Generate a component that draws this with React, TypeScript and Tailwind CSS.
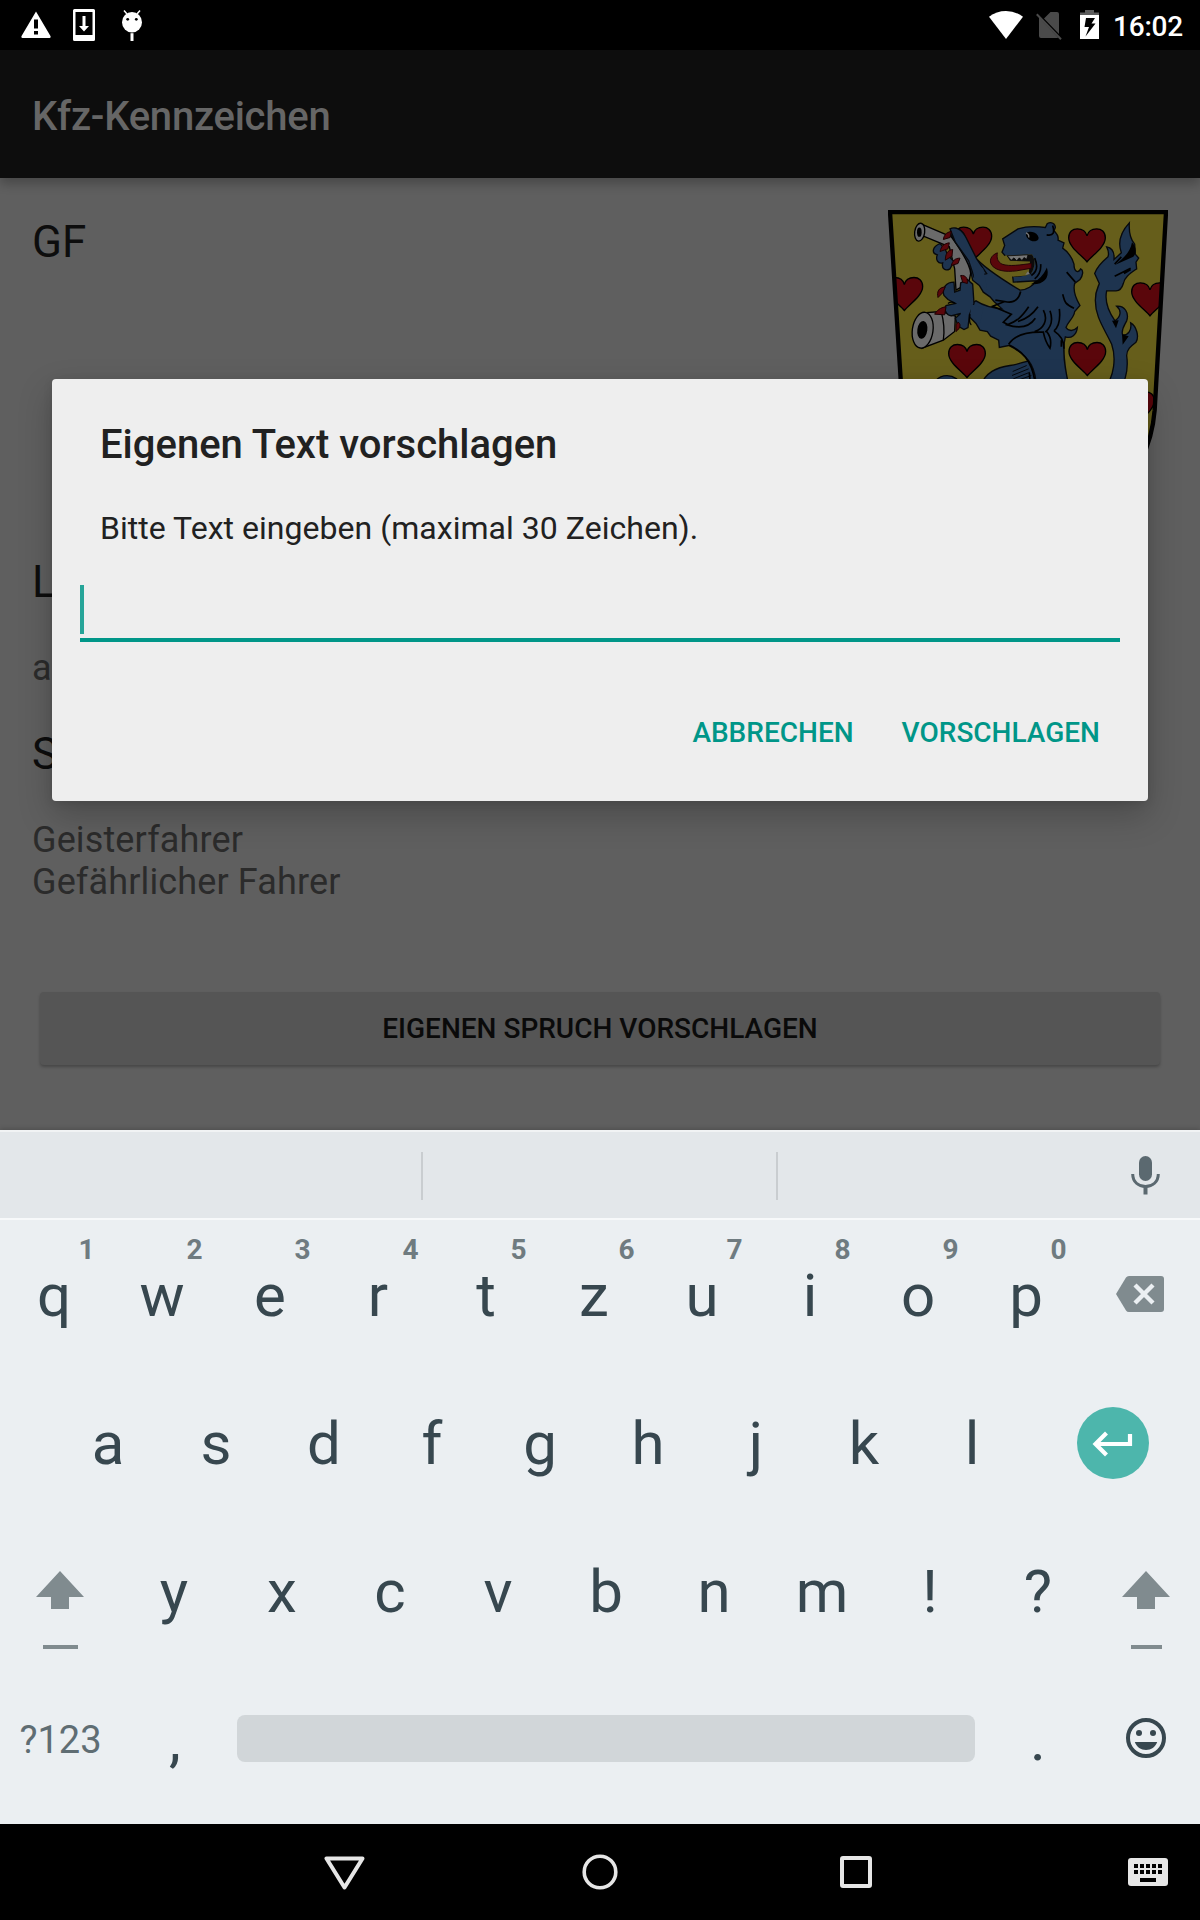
import type { ReactNode } from "react";

function Heart({ x, y }: { x: number; y: number }) {
  return (
    <path
      transform={`translate(${x} ${y})`}
      d="M0 50 C-14 32 -55 6 -55 -22 C-55 -40 -43 -49 -29 -49 C-14 -49 -3 -40 0 -28 C3 -40 14 -49 29 -49 C43 -49 55 -40 55 -22 C55 6 14 32 0 50Z"
      fill="#5a060b"
      stroke="#000"
      strokeWidth="4"
    />
  );
}

function Crest() {
  return (
    <svg width="280" height="327" viewBox="54 60 840 980" className="block">
      <defs>
        <clipPath id="shield">
          <path d="M60 66H888L854 660Q840 830 720 910Q600 985 474 1020Q340 985 230 910Q112 830 98 660Z" />
        </clipPath>
      </defs>
      <path d="M60 66H888L854 660Q840 830 720 910Q600 985 474 1020Q340 985 230 910Q112 830 98 660Z" fill="#665e1b" />
      <g clipPath="url(#shield)">
        <Heart x={310} y={160} />
        <Heart x={651} y={165} />
        <Heart x={103} y={311} />
        <Heart x={840} y={327} />
        <Heart x={291} y={512} />
        <Heart x={652} y={506} />
        <Heart x={798} y={654} />

        {/* tail */}
        <path
          d="M700 600C735 560 738 500 725 462C700 410 676 380 676 330C676 300 685 290 688 280L674 250C680 232 700 212 714 200C718 188 714 178 710 170C722 172 734 182 732 208L754 188C744 160 748 130 778 98C776 130 782 148 794 162L796 192L806 204L798 216L800 236C780 250 762 262 760 280C756 294 748 302 738 302L710 302C704 330 710 356 735 392C752 380 756 362 740 348C764 346 778 368 770 392C762 408 752 420 758 434C774 436 786 420 782 398C800 408 808 440 798 456C782 468 770 478 770 496C776 540 765 575 748 600Z"
          fill="#1e344f"
          stroke="#07090c"
          strokeWidth="4"
        />
        <path d="M786 156C800 170 800 188 790 200L736 224C756 206 780 190 786 156ZM726 392L746 390L738 414ZM756 432L776 438L758 464Z" fill="#000" />
        <path d="M734 222L754 200M734 258L782 234M762 250L782 238" fill="none" stroke="#000" strokeWidth="5" />

        {/* far hip and mane of the body */}
        <path d="M190 580C206 556 234 548 260 566L270 590ZM330 590C346 546 380 532 420 526C450 522 458 516 476 512L520 600Z" fill="#1e344f" stroke="#07090c" strokeWidth="4" />
        <path d="M428 544L470 526M426 556L476 536M430 566L480 546M450 568L484 556" stroke="#000" strokeWidth="2.5" />

        {/* head, mane and torso */}
        <path
          d="M398 146L444 116C470 108 500 108 526 112L532 100C544 94 556 100 556 112L552 122C562 132 566 142 564 150L582 158L578 174C596 186 606 202 612 222C612 240 622 254 632 236C642 240 638 258 630 268L614 280C608 302 616 322 630 346L614 364C612 384 592 396 588 412C596 424 610 424 622 412C620 434 604 446 586 440C578 470 582 530 600 600H500C498 540 486 500 416 466L388 472L386 450L362 438L352 424L330 420L318 400L298 380L304 340L318 332C340 346 372 354 396 356L372 334L360 320L340 306L328 286L308 270L300 232L240 128C248 108 266 112 280 128L310 196C340 232 400 270 450 300C470 300 490 286 498 272L430 276L428 258C450 260 468 252 482 250C486 220 478 204 480 198L410 202L396 186L404 166Z"
          fill="#1e344f"
          stroke="#07090c"
          strokeWidth="4"
        />
        <path d="M406 196L486 193C496 208 496 226 486 246L468 256L428 260L400 234L374 220Z" fill="#665e1b" />
        <path d="M410 196L486 193C496 208 496 226 486 246L476 252L480 214L420 212Z" fill="#0c0c0c" />
        <path d="M412 197L474 194L470 207L462 202L456 211L448 203L440 212L432 203L424 210Z" fill="#777" stroke="#000" strokeWidth="2" />
        <path d="M382 188C362 196 356 212 366 226C380 242 406 246 440 242L484 234L484 220C450 224 420 230 396 222C382 214 380 204 382 188Z" fill="#5a060b" stroke="#250306" strokeWidth="3" />
        <path d="M466 254L474 243L480 252Z" fill="#777" />
        <ellipse cx="487" cy="139" rx="20" ry="13" transform="rotate(25 487 139)" fill="#000" />
        <path d="M468 128Q478 132 476 142" stroke="#777" strokeWidth="4" fill="none" />
        <path d="M530 238C536 262 520 280 490 280C508 270 520 260 530 238Z" fill="#000" stroke="#000" strokeWidth="4" />
        <path
          d="M494 204C504 226 502 244 484 256M512 222C514 246 504 258 494 266M548 106C554 126 552 138 530 134M590 246L616 276M578 312C584 330 580 340 612 354M452 304C446 330 430 340 404 334L376 330M404 334L368 348L424 372L400 396L412 402M476 350C456 380 440 394 412 404C450 416 480 408 496 384M504 350C490 370 466 388 444 394M520 360C536 390 520 416 494 424M540 362C550 390 544 410 526 426M568 356C572 390 566 410 552 422M416 462C430 440 462 424 520 426C526 456 534 466 540 474C546 450 538 434 530 424M552 422C572 436 582 450 582 476M416 464C456 482 484 510 494 570M478 548L480 570M574 450V470"
          fill="none"
          stroke="#000"
          strokeWidth="5"
        />

        {/* upper and lower horn */}
        <path d="M160 104L244 140C270 176 300 220 302 250L296 278L258 300L254 236L238 170L160 138Z" fill="#6a6a6a" stroke="#000" strokeWidth="4" />
        <ellipse cx="149" cy="126" rx="15" ry="27" transform="rotate(8 149 126)" fill="#6a6a6a" stroke="#000" strokeWidth="4" />
        <ellipse cx="148" cy="126" rx="7" ry="14" fill="#000" />
        <path d="M160 368L214 364L256 378L254 424L220 450L156 474Z" fill="#6a6a6a" stroke="#000" strokeWidth="4" />
        <path d="M214 366Q226 410 220 450" stroke="#000" strokeWidth="4" fill="none" />
        <ellipse cx="158" cy="420" rx="31" ry="54" transform="rotate(8 158 420)" fill="#6a6a6a" stroke="#000" strokeWidth="4" />
        <ellipse cx="157" cy="419" rx="15" ry="27" transform="rotate(8 157 419)" fill="#000" />

        {/* paws */}
        <path
          d="M210 160C186 170 184 190 202 194C196 208 204 222 218 218C214 236 226 244 240 236L252 214L234 196L226 178ZM240 116C256 108 276 118 288 142L320 206L350 250L312 260L296 212L256 156Z"
          fill="#1e344f"
          stroke="#07090c"
          strokeWidth="4"
        />
        <path d="M312 340L308 282L292 268L272 278L270 300L254 306L252 276C230 276 214 292 222 316L234 328L256 340L228 346C220 360 232 380 248 376L272 370L256 384L264 408L282 418L294 412L298 374Z" fill="#1e344f" stroke="#07090c" strokeWidth="4" />
        <path d="M304 342L340 354L330 400L300 376ZM308 210L340 236L352 300L312 262Z" fill="#1e344f" />
        <path d="M300 372Q296 400 304 404M234 340Q244 332 256 340" fill="none" stroke="#000" strokeWidth="4" />
        <path
          d="M244 124C228 126 222 136 220 148L240 142ZM238 158C222 160 214 168 210 184L234 176ZM248 178C232 180 226 192 226 210L246 198ZM270 204C254 204 248 212 244 226L264 220ZM272 256C288 254 294 266 292 280L278 276ZM226 290C206 292 200 304 204 322L218 308ZM228 350C210 352 200 362 194 372L224 374ZM264 396C272 400 274 412 258 424L258 404Z"
          fill="#5a060b"
          stroke="#1d0204"
          strokeWidth="3"
        />
      </g>
      <path d="M60 66H888L854 660Q840 830 720 910Q600 985 474 1020Q340 985 230 910Q112 830 98 660Z" fill="none" stroke="#000" strokeWidth="13" />
    </svg>
  );
}

function StatusBar() {
  return (
    <header className="flex h-[50px] items-start bg-black pl-[21px] pr-[16px] text-white">
      <svg width="30" height="50" viewBox="0 0 30 50">
        <path fill="#fff" fillRule="evenodd" d="M15 11.5 29.6 36.2Q30 38 28.6 38H1.4Q0 38 .4 36.2ZM13 19.5V28.5H17V19.5ZM13 31V34.5H17V31Z" />
      </svg>
      <svg className="ml-[22px]" width="22" height="50" viewBox="0 0 22 50">
        <path fill="#fff" fillRule="evenodd" d="M1.500 9H20.500Q22 9 22 10.500V39.500Q22 41 20.500 41H1.500Q0 41 0 39.500V10.500Q0 9 1.500 9ZM2.500 12V35H19.500V12Z" />
        <path fill="#fff" d="M9.500 16H12.500V26H16L11 31.500 6 26H9.500Z" />
      </svg>
      <svg className="ml-[27px]" width="20" height="50" viewBox="0 0 20 50">
        <path stroke="#fff" strokeWidth="1.500" d="M2 10.500 5 14M18 10.500 15 14" />
        <ellipse cx="10" cy="22.200" rx="10" ry="10.200" fill="#fff" />
        <circle cx="5.700" cy="19.300" r="1.400" fill="#000" />
        <circle cx="14.300" cy="19.300" r="1.400" fill="#000" />
        <path fill="#fff" d="M8.500 33.200H11.500V41H8.500Z" />
      </svg>
      <svg className="ml-auto" width="34" height="50" viewBox="0 0 34 50">
        <path fill="#fff" d="M17 39 0 16.800Q7.500 11 17 11T34 16.800Z" />
      </svg>
      <svg className="ml-[13px]" width="26" height="50" viewBox="0 0 26 50">
        <path fill="#4a4a4a" d="M8 18.500 14.500 12H21Q23 12 23 14V34ZM3 17 22 37.500Q21.500 38 21 38H5Q3 38 3 36Z" />
        <path d="M.8 14.300 25 39.300" stroke="#4a4a4a" strokeWidth="2" />
      </svg>
      <svg className="ml-[18px]" width="19" height="50" viewBox="0 0 19 50">
        <path fill="#5c5c5c" d="M5 10H14V12.500H19V15H0V12.500H5Z" />
        <path fill="#fff" fillRule="evenodd" d="M0 15H19V39H0ZM6 18 4.500 27H9L5.500 36.500 15.500 23.500H11.500L15 18Z" />
      </svg>
      <span className="ml-[14px] w-[71px] whitespace-nowrap text-[28px] font-medium leading-[53px] tracking-[-0.2px]">16:02</span>
    </header>
  );
}

function Key({ label, hint }: { label: string; hint?: string }) {
  return (
    <button className="relative h-[148px] w-[108px] text-center text-[60px] leading-[148px] text-[#37474f]">
      {label}
      {hint && <span className="absolute right-[13.5px] top-[11px] text-[28px] font-bold leading-[33px] text-[#6f7b80]">{hint}</span>}
    </button>
  );
}

function KeyRow({ className, children }: { className: string; children: ReactNode }) {
  return <div className={"flex h-[148px] " + className}>{children}</div>;
}

function Shift({ narrow }: { narrow?: boolean }) {
  return (
    <svg width={narrow ? 108 : 120} height="148" viewBox={narrow ? "6 0 108 148" : "0 0 120 148"}>
      <path fill="#808b8f" d="M60 49 84 75H69V87H51V75H36Z" />
      <path fill="#808b8f" d={narrow ? "M45 123H76V127H45Z" : "M43 123H78V127H43Z"} />
    </svg>
  );
}

const topRow = ["q", "w", "e", "r", "t", "z", "u", "i", "o", "p"];

function Keyboard() {
  return (
    <section className="relative h-[694px] bg-[#ebeff2] shadow-[0_-1px_5px_rgba(0,0,0,0.2)]">
      <div className="flex h-[90px] items-center border-b-2 border-t-2 border-b-[#f7f9fa] border-t-[#f1f3f4] bg-[#e3e7ea]">
        <div className="ml-[421px] mt-[2px] h-[48px] w-[2px] bg-[#c9cdd0]" />
        <div className="ml-[353px] mt-[2px] h-[48px] w-[2px] bg-[#c9cdd0]" />
        <svg className="ml-auto mr-[40px]" width="29" height="40" viewBox="0 0 29 40">
          <rect x="8" y="1" width="13" height="25" rx="6.500" fill="#5b6970" />
          <path d="M1.700 19C1.700 27 7.500 31.500 14.500 31.500S27.300 27 27.300 19" fill="none" stroke="#5b6970" strokeWidth="3" />
          <path d="M12.500 31.500H16.500V39.500H12.500Z" fill="#5b6970" />
        </svg>
      </div>
      <div className="pt-[2px]">
        <KeyRow className="">
          {topRow.map((k, i) => (
            <Key key={k} label={k} hint={String((i + 1) % 10)} />
          ))}
          <svg width="120" height="148" viewBox="0 0 120 148">
            <path fill="#808b8f" d="M49 54H81Q84 54 84 57V87Q84 90 81 90H49Q47 90 46 88.500L36 72 46 55.500Q47 54 49 54Z" />
            <path stroke="#ebeff2" strokeWidth="4.400" d="M55 63 73 81M73 63 55 81" />
          </svg>
        </KeyRow>
        <KeyRow className="pl-[54px]">
          {[..."asdfghjkl"].map((k) => (
            <Key key={k} label={k} />
          ))}
          <div className="ml-[51px] mt-[37px] h-[72px] w-[72px] rounded-full bg-[#4db6ac]">
            <svg width="72" height="72" viewBox="0 0 72 72">
              <path d="M53 27V37H19M29.500 26 18.500 37 29.500 48" fill="none" stroke="#fff" strokeWidth="4.200" />
            </svg>
          </div>
        </KeyRow>
        <KeyRow className="">
          <div className="pt-[4px]">
            <Shift />
          </div>
          {[..."yxcvbnm!?"].map((k) => (
            <Key key={k} label={k} />
          ))}
          <div className="pt-[4px]">
            <Shift narrow />
          </div>
        </KeyRow>
        <KeyRow className="">
          <button className="w-[121px] text-center text-[38px] leading-[149px] text-[#5f6d73]">?123</button>
          <Key label="," />
          <div className="ml-[8px] mr-[9px] mt-[49px] h-[47px] w-[738px] rounded-[8px] bg-[#d1d6d9]" />
          <Key label="." />
          <svg width="108" height="148" viewBox="0 0 108 148">
            <circle cx="54" cy="72" r="18" fill="none" stroke="#37474f" strokeWidth="4" />
            <circle cx="47" cy="67" r="3" fill="#37474f" />
            <circle cx="61" cy="67" r="3" fill="#37474f" />
            <path fill="#37474f" d="M42.800 76H65.200C63.500 81 59 84 54 84S44.500 81 42.800 76Z" />
          </svg>
        </KeyRow>
      </div>
    </section>
  );
}

function NavBar() {
  return (
    <nav className="flex h-[96px] items-center bg-black pl-[324px] pr-[32px]">
      <svg width="41" height="36" viewBox="0 0 41 36">
        <path d="M2.500 4.500H38.500L20.500 33.500Z" fill="none" stroke="#e6e6e6" strokeWidth="4" strokeLinejoin="round" />
      </svg>
      <svg className="ml-[217px]" width="36" height="36" viewBox="0 0 36 36">
        <circle cx="18" cy="18" r="15.800" fill="none" stroke="#e6e6e6" strokeWidth="3.600" />
      </svg>
      <div className="ml-[222px] h-[32px] w-[32px] rounded-[3px] border-4 border-[#e6e6e6]" />
      <svg className="ml-auto" width="40" height="28" viewBox="0 0 40 28">
        <rect width="40" height="28" rx="3" fill="#e6e6e6" />
        {[6, 12, 18, 24, 30].map((x) => (
          <path key={x} d={`M${x} 6h4v4h-4zM${x} 12h4v4h-4z`} fill="#000" />
        ))}
        <path d="M12 20H28V24H12Z" fill="#000" />
      </svg>
    </nav>
  );
}

function Dialog() {
  return (
    <div className="absolute left-[52px] top-[379px] h-[422px] w-[1096px] rounded-[4px] bg-[#eeeeee] pt-[42px] shadow-[0_14px_34px_rgba(0,0,0,0.22),0_2px_10px_rgba(0,0,0,0.1)]">
      <h2 className="pl-[48px] text-[40px] font-medium leading-[48px] text-[#212121]">Eigenen Text vorschlagen</h2>
      <p className="mt-[40px] pl-[48px] text-[32px] leading-[38px] tracking-[0.03px] text-[#212121]">Bitte Text eingeben (maximal 30 Zeichen).</p>
      <div className="mx-[28px] mt-[38px] h-[57px] border-b-4 border-[#009688]">
        <div className="h-[49px] w-[4px] bg-[#26a498]" />
      </div>
      <div className="mt-[73px] flex justify-end gap-[48px] pr-[48px] text-[28px] font-medium leading-[36px] text-[#009688]">
        <button>ABBRECHEN</button>
        <button>VORSCHLAGEN</button>
      </div>
    </div>
  );
}

export default function App() {
  return (
    <div className="relative flex h-[1920px] w-[1200px] flex-col overflow-hidden bg-[#5f5f5f] font-['Roboto',sans-serif]">
      <StatusBar />
      <div className="relative h-[128px] bg-[#0d0d0d] pl-[32px] shadow-[0_6px_10px_rgba(0,0,0,0.24)]">
        <h1 className="pt-[3px] text-[40px] font-medium leading-[128px] tracking-[-0.24px] text-[#666666]">Kfz-Kennzeichen</h1>
      </div>
      <main className="h-[952px] px-[32px] pt-[32px]">
        <div className="flex h-[346px] justify-between">
          <div className="text-[44px] leading-[64px] text-[#0d0d0d]">GF</div>
          <Crest />
        </div>
        <div className="text-[44px] leading-[52px] text-[#0d0d0d]">Landkreis</div>
        <div className="mt-[39px] text-[36px] leading-[42px] text-[#2b2b2b]">aus Gifhorn</div>
        <div className="mt-[39px] text-[44px] leading-[52px] text-[#0d0d0d]">Sprüche</div>
        <div className="mt-[39px] text-[36px] leading-[42px] tracking-[0.13px] text-[#2b2b2b]">
          <p>Geisterfahrer</p>
          <p>Gefährlicher Fahrer</p>
        </div>
        <button className="mx-[8px] mt-[89px] block h-[73px] w-[1120px] rounded-[4px] bg-[#555555] text-center text-[28px] font-medium text-[#0a0a0a] shadow-[0_2px_3px_rgba(0,0,0,0.25)]">
          EIGENEN SPRUCH VORSCHLAGEN
        </button>
      </main>
      <Keyboard />
      <NavBar />
      <Dialog />
    </div>
  );
}
